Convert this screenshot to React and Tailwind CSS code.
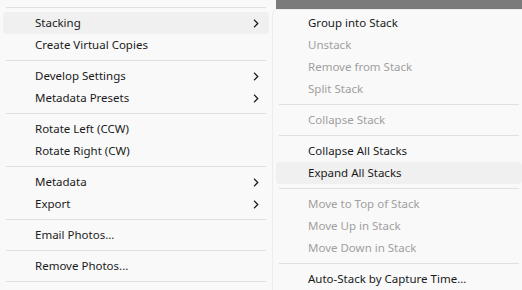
import React from 'react';

const leftItems = [
  { sep: true },
  { label: 'Stacking', sub: true, hover: true },
  { label: 'Create Virtual Copies' },
  { sep: true },
  { label: 'Develop Settings', sub: true },
  { label: 'Metadata Presets', sub: true },
  { sep: true },
  { label: 'Rotate Left (CCW)' },
  { label: 'Rotate Right (CW)' },
  { sep: true },
  { label: 'Metadata', sub: true },
  { label: 'Export', sub: true },
  { sep: true },
  { label: 'Email Photos...' },
  { sep: true },
  { label: 'Remove Photos...' },
  { sep: true },
];

const rightItems = [
  { label: 'Group into Stack' },
  { label: 'Unstack', off: true },
  { label: 'Remove from Stack', off: true },
  { label: 'Split Stack', off: true },
  { sep: true },
  { label: 'Collapse Stack', off: true },
  { sep: true },
  { label: 'Collapse All Stacks' },
  { label: 'Expand All Stacks', hover: true },
  { sep: true },
  { label: 'Move to Top of Stack', off: true },
  { label: 'Move Up in Stack', off: true },
  { label: 'Move Down in Stack', off: true },
  { sep: true },
  { label: 'Auto-Stack by Capture Time...' },
];

const Chevron = () => (
  <svg width="6" height="9" viewBox="0 0 6 9" className="text-[#1a1a1a]">
    <polyline points="1,0.8 4.8,4.5 1,8.2" fill="none" stroke="currentColor" strokeWidth="1.2" />
  </svg>
);

const Row = ({ item }) => {
  if (item.sep) {
    return (
      <div className="py-1 px-[3px]">
        <div className="h-px bg-[#e0e0e0]" />
      </div>
    );
  }
  return (
    <div
      className={`h-[22px] flex items-center rounded-[4px] ${item.hover ? 'bg-[#f0f0f0]' : ''} ${
        item.off ? 'text-[#a0a0a0]' : 'text-[#1a1a1a]'
      }`}
    >
      <span className="flex-1 pl-[32px]">{item.label}</span>
      {item.sub && (
        <span className="w-[16px] flex items-center">
          <Chevron />
        </span>
      )}
    </div>
  );
};

export default function App() {
  return (
    <div
      className="w-[522px] h-[290px] flex overflow-hidden bg-[#f9f9f9] text-[11.5px]"
      style={{ fontFamily: '"Segoe UI", "Noto Sans", sans-serif' }}
    >
      {/* main context menu */}
      <div className="w-[270px] h-full flex flex-col pl-[3px] pr-px pt-[3px]">
        {leftItems.map((item, i) => (
          <Row key={i} item={item} />
        ))}
      </div>

      {/* Stacking submenu */}
      <div className="flex-1 flex flex-col">
        <div className="h-[9px] flex">
          <div className="w-[6px] bg-[#f9f9f9]" />
          <div className="flex-1 bg-[#7b7b7b]" />
        </div>
        <div className="flex-1 ml-[2px] bg-[#f9f9f9] border-l border-t border-[#ececec] rounded-tl-[6px] pl-[3px] pt-[2px] flex flex-col">
          {rightItems.map((item, i) => (
            <Row key={i} item={item} />
          ))}
        </div>
      </div>
    </div>
  );
}
